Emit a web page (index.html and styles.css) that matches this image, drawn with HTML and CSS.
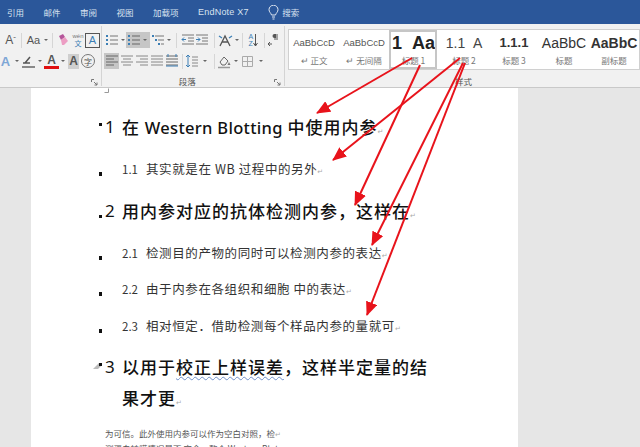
FILE: index.html
```html
<!DOCTYPE html>
<html lang="zh-CN">
<head>
    <meta charset="UTF-8">
    <title>Word</title>
    <link rel="stylesheet" href="styles.css">
</head>
<body>
<div class="window">
    <div class="tabs">
        <span>引用</span><span>邮件</span><span>审阅</span><span>视图</span><span>加载项</span><span class="tab-en">EndNote X7</span>
        <span class="search">
            <svg width="11" height="15" viewBox="0 0 11 15" fill="none" stroke="#dfe7f2"><path d="M3.5 10C3 8 1 7 1 4.700a4.500 4.500 0 0 1 9 0C10 7 8 8 7.500 10zM4 12h3M4.500 14h2"/></svg>
            搜索
        </span>
    </div>

    <div class="ribbon">
        <div class="group group-font">
            <div class="row">
                <span class="ico txt small-a">A<sup>ˇ</sup></span>
                <i class="sep"></i>
                <span class="ico txt aa">Aa</span><b class="caret"></b>
                <i class="sep"></i>
                <span class="ico"><svg width="15" height="15" viewBox="0 0 15 15"><path d="M3 3l4-2 2 3-4 3z" fill="#b5559a"/><path d="M5 7l4-3 3 4-4 4H6z" fill="#ec9dc3"/></svg></span>
                <span class="ico wen"><em>wén</em><span>文</span></span>
                <span class="ico txt boxed">A</span>
            </div>
            <div class="row row-two">
                <span class="ico txt glow">A</span><b class="caret"></b>
                <span class="ico nudge"><svg width="15" height="15" viewBox="0 0 15 15" fill="none"><path d="M2 9h7M9 3L4 9" stroke="#555" stroke-width="1.500"/><path d="M1 13h13" stroke="#666" stroke-width="1.500"/></svg></span><b class="caret"></b>
                <span class="ico txt red-a nudge">A</span><b class="caret"></b>
                <span class="ico txt shaded">A</span>
                <span class="ico circled">字</span>
            </div>
            <svg class="launcher" width="7" height="7" viewBox="0 0 7 7" fill="none" stroke="#777"><path d="M.500 3V.500H3M3 3l3 3M6 3.500V6H3.500"/></svg>
            <div class="group-label"></div>
        </div>

        <div class="group group-para">
            <div class="row">
                <span class="ico"><svg width="14" height="14" viewBox="0 0 14 14"><path d="M1 2h2v2H1zM1 6h2v2H1zM1 10h2v2H1z" fill="#3c7fb5"/><path d="M5 3h8M5 7h8M5 11h8" stroke="#777"/></svg></span><b class="caret"></b>
                <span class="picked">
                    <span class="ico"><svg width="14" height="14" viewBox="0 0 14 14"><path d="M1 2h2v2H1zM1 6h2v2H1zM1 10h2v2H1z" fill="#3c7fb5"/><path d="M5 3h8M5 7h8M5 11h8" stroke="#666"/></svg></span><b class="caret"></b>
                </span>
                <span class="ico"><svg width="14" height="14" viewBox="0 0 14 14"><path d="M1 2h2v2H1zM4 6h2v2H4zM7 10h2v2H7z" fill="#3c7fb5"/><path d="M4 3h9M7 7h6M10 11h3" stroke="#777"/></svg></span><b class="caret"></b>
                <i class="sep sep-a"></i>
                <span class="ico ico-n"><svg width="14" height="14" viewBox="0 0 14 14" fill="none"><path d="M1 2h12M7 5h6M7 8h6M1 11h12" stroke="#777"/><path d="M5 6.500H1M3 4.500L1 6.500l2 2" stroke="#3c7fb5"/></svg></span>
                <span class="ico ico-n"><svg width="14" height="14" viewBox="0 0 14 14" fill="none"><path d="M1 2h12M7 5h6M7 8h6M1 11h12" stroke="#777"/><path d="M1 6.500h4M3 4.500l2 2-2 2" stroke="#3c7fb5"/></svg></span>
                <i class="sep sep-b"></i>
                <span class="ico"><svg width="15" height="14" viewBox="0 0 15 14" fill="none"><path d="M2 13L7 3l5 10M4 9h6" stroke="#555" stroke-width="1.300"/><path d="M1 3l3 2M14 3l-3 2" stroke="#3c7fb5" stroke-width="1.300"/></svg></span><b class="caret"></b>
                <i class="sep sep-c"></i>
                <span class="ico ico-n az"><span>A<br>Z</span><svg width="5" height="13" viewBox="0 0 5 13" fill="none" stroke="#555"><path d="M2.500 0v12M.500 9l2 3 2-3"/></svg></span>
                <i class="sep sep-d"></i>
                <span class="ico ico-n"><svg width="14" height="14" viewBox="0 0 14 14"><path d="M8 1v6M10 1v6" stroke="#555"/><path d="M9 1H7.500a2 2 0 0 0 0 4H9z" fill="#555"/><path d="M1 11h4M3 9l-2 2 2 2" stroke="#555" fill="none"/></svg></span>
            </div>
            <div class="row row-two">
                <span class="picked picked-align"><span class="ico"><svg width="14" height="14" viewBox="0 0 14 14"><path d="M1 2h12M1 5h8M1 8h12M1 11h8" stroke="#666"/></svg></span></span>
                <span class="ico"><svg width="14" height="14" viewBox="0 0 14 14"><path d="M1 2h12M3 5h8M1 8h12M3 11h8" stroke="#888"/></svg></span>
                <span class="ico"><svg width="14" height="14" viewBox="0 0 14 14"><path d="M1 2h12M5 5h8M1 8h12M5 11h8" stroke="#888"/></svg></span>
                <span class="ico"><svg width="14" height="14" viewBox="0 0 14 14"><path d="M1 2h12M1 5h12M1 8h12M1 11h12" stroke="#888"/></svg></span>
                <span class="ico"><svg width="14" height="14" viewBox="0 0 14 14" fill="none"><path d="M1 2h12M1 5h12M1 8h12M1 11h12" stroke="#666"/><path d="M3 0v3M11 0v3M1 12h12" stroke="#3c7fb5"/></svg></span>
                <i class="sep sep-e"></i>
                <span class="ico"><svg width="14" height="14" viewBox="0 0 14 14" fill="none"><path d="M3 1v12M1 3l2-2 2 2M1 11l2 2 2-2" stroke="#3c7fb5"/><path d="M7 3h6M7 6h6M7 9h6M7 12h6" stroke="#888"/></svg></span><b class="caret caret-far"></b>
                <i class="sep sep-f"></i>
                <span class="ico"><svg width="15" height="15" viewBox="0 0 15 15" fill="none"><path d="M3 8l4-5 4 4-3 4H5z" stroke="#666"/><path d="M12 8l1.500 3h-3z" fill="#777"/><path d="M1 13.500h12" stroke="#999" stroke-width="1.500"/></svg></span><b class="caret"></b>
                <span class="ico ico-border"><svg width="13" height="13" viewBox="0 0 13 13" fill="none"><path d="M1.500 1.500h10v10h-10zM6.500 1.500v10M1.500 6.500h10" stroke="#aaa"/></svg></span><b class="caret caret-far"></b>
            </div>
            <svg class="launcher" width="7" height="7" viewBox="0 0 7 7" fill="none" stroke="#777"><path d="M.500 3V.500H3M3 3l3 3M6 3.500V6H3.500"/></svg>
            <div class="group-label label-para">段落</div>
        </div>

        <div class="group group-styles">
            <div class="gallery">
                <div class="style"><span class="sample s-plain">AaBbCcD</span><span class="style-name">↵ 正文</span></div>
                <div class="style"><span class="sample s-plain">AaBbCcD</span><span class="style-name">↵ 无间隔</span></div>
                <div class="style style-on"><span class="sample s-h1">1&nbsp;&nbsp;Aa</span><span class="style-name">标题 1</span></div>
                <div class="style"><span class="sample s-h2">1.1&nbsp;&nbsp;A</span><span class="style-name">标题 2</span></div>
                <div class="style"><span class="sample s-h3">1.1.1</span><span class="style-name">标题 3</span></div>
                <div class="style"><span class="sample s-title">AaBbC</span><span class="style-name">标题</span></div>
                <div class="style"><span class="sample s-sub">AaBbC</span><span class="style-name">副标题</span></div>
            </div>
            <div class="group-label label-styles">样式</div>
        </div>
    </div>

    <div class="workspace">
        <div class="page">
            <svg class="corner" width="5" height="5" viewBox="0 0 5 5" fill="none" stroke="#999"><path d="M.500 4.500v-4h4"/></svg>
            <div class="h1 first"><i class="dot dot-high"></i><span class="num">1</span><span>在 <span class="latin">Western Blotting</span> 中使用内参<u class="mark">↵</u></span></div>
            <div class="h2"><i class="dot"></i><span class="num">1.1</span><span>其实就是在 WB 过程中的另外<u class="mark">↵</u></span></div>
            <div class="h1"><i class="dot"></i><span class="num">2</span><span>用内参对应的抗体检测内参，这样在<u class="mark">↵</u></span></div>
            <div class="h2"><i class="dot"></i><span class="num">2.1</span><span>检测目的产物的同时可以检测内参的表达<u class="mark">↵</u></span></div>
            <div class="h2 tight"><i class="dot"></i><span class="num">2.2</span><span>由于内参在各组织和细胞 中的表达<u class="mark">↵</u></span></div>
            <div class="h2 tight"><i class="dot"></i><span class="num">2.3</span><span>相对恒定．借助检测每个样品内参的量就可<u class="mark">↵</u></span></div>
            <div class="h1"><svg class="anchor" width="8" height="6" viewBox="0 0 8 6"><path d="M0 6l6-6 2 3-3 3z" fill="#bbb"/></svg><i class="dot dot-high"></i><span class="num">3</span><span>以用于<span class="wavy">校正上样误差</span>，这样半定量的结<br>果才更<u class="mark">↵</u></span></div>
            <p class="note">为可信。此外使用内参可以作为空白对照，检<u class="mark">↵</u><br>测蛋白转膜情况是否 完全，整个 Western Blot<u class="mark">↵</u></p>
        </div>
    </div>

    <svg class="arrows" width="640" height="447" viewBox="0 0 640 447">
        <defs>
            <marker id="head" markerWidth="7" markerHeight="6" refX="6.500" refY="3" orient="auto"><path d="M0 0L7 3L0 6z" fill="#e8131b"/></marker>
        </defs>
        <g stroke="#e8131b" stroke-width="2">
            <path d="M412 58L317 113" marker-end="url(#head)"/>
            <path d="M420 65L355 205" marker-end="url(#head)"/>
            <path d="M460 58L333 160" marker-end="url(#head)"/>
            <path d="M463 63L372 245" marker-end="url(#head)"/>
            <path d="M465 63L367 315" marker-end="url(#head)"/>
        </g>
    </svg>
</div>
</body>
</html>
```

FILE: styles.css
```css
html, body {
    margin: 0;
    height: 100%;
    overflow: hidden;
}
body {
    font-family: "Noto Sans CJK SC", "Liberation Sans", sans-serif;
    color: #333;
}
.window {
    position: relative;
    width: 640px;
    height: 447px;
    overflow: hidden;
    display: flex;
    flex-direction: column;
}

/* title tabs */
.tabs {
    height: 24px;
    flex: none;
    background-color: #2b579a;
    color: #d9e3f0;
    font-size: 8.500px;
    display: flex;
    align-items: center;
    gap: 19.500px;
    padding-left: 7px;
}
.tab-en {
    font-family: "Liberation Sans", sans-serif;
    font-size: 9px;
    letter-spacing: .2px;
}
.search {
    display: flex;
    align-items: center;
    gap: 3px;
}

/* ribbon */
.ribbon {
    height: 63px;
    flex: none;
    display: flex;
    background-color: #f1f1f1;
    border-bottom: 1px solid #c9c9c9;
}
.group {
    position: relative;
    box-sizing: border-box;
    height: 60px;
    margin-top: 2px;
    border-right: 1px solid #d4d4d4;
}
.group-font {
    width: 103px;
    padding-left: 3px;
}
.group-para {
    width: 184px;
    padding-left: 2px;
}
.group-styles {
    flex: 1;
    border-right: none;
    padding-left: 2px;
}
.row {
    display: flex;
    align-items: center;
    height: 16px;
    margin-top: 6px;
}
.row-two {
    margin-top: 5px;
}
.ico {
    width: 15px;
    height: 15px;
    flex: none;
    display: flex;
    align-items: center;
    justify-content: center;
}
.ico-n {
    width: 14px;
}
.nudge {
    margin-left: 1px;
}
.txt {
    font-family: "Liberation Sans", sans-serif;
    color: #555;
    font-size: 12px;
}
.small-a sup {
    font-size: 8px;
    line-height: 0;
}
.aa {
    width: 17px;
    font-size: 11px;
}
.caret {
    width: 7px;
    flex: none;
    display: flex;
    justify-content: center;
}
.caret::after {
    content: "";
    border-left: 2px solid transparent;
    border-right: 2px solid transparent;
    border-top: 2.500px solid #666;
}
.caret-far {
    margin-left: 2px;
}
.sep {
    width: 1px;
    height: 15px;
    flex: none;
    margin: 0 3px;
    background-color: #d6d6d6;
}
.sep-a {
    margin: 0 4px;
}
.sep-b {
    margin: 0 3px 0 5px;
}
.sep-c {
    margin: 0 3px 0 2px;
}
.sep-d {
    margin: 0 2px 0 4px;
}
.sep-e {
    margin: 0 1px 0 3px;
}
.sep-f {
    margin: 0 2px 0 6px;
}
.wen {
    flex-direction: column;
    justify-content: flex-start;
    width: 14px;
    font-size: 7px;
    line-height: 7px;
    color: #3c7fb5;
}
.wen em {
    font-family: "Liberation Sans", sans-serif;
    font-size: 6px;
    line-height: 7px;
    font-style: normal;
    color: #777;
}
.boxed {
    box-sizing: border-box;
    border: 1px solid #555;
    color: #3c7fb5;
    font-size: 11px;
}
.glow {
    margin-left: -5px;
    color: #7ea6d6;
    font-weight: bold;
    font-size: 13px;
}
.red-a {
    font-weight: bold;
    box-sizing: border-box;
    border-bottom: 3px solid #e01010;
    line-height: 12px;
}
.shaded {
    width: 11px;
    margin: 0 2px;
    background-color: #cfcfcf;
    font-weight: bold;
}
.circled {
    box-sizing: border-box;
    width: 14px;
    height: 14px;
    border: 1px solid #777;
    border-radius: 50%;
    font-size: 8px;
    color: #555;
}
.picked {
    display: flex;
    align-items: center;
    height: 16px;
    padding-right: 2px;
    background-color: #c6c6c6;
}
.picked-align {
    padding: 0;
}
.az {
    font-family: "Liberation Sans", sans-serif;
    font-size: 7px;
    line-height: 7px;
    color: #3c7fb5;
}
.ico-border {
    margin-left: 1px;
}
.launcher {
    position: absolute;
    right: 3px;
    bottom: 0;
}
.group-label {
    font-size: 8.500px;
    line-height: 12px;
    color: #555;
    text-align: center;
    margin-top: 6px;
}
.label-para {
    padding-right: 14px;
}
.label-styles {
    margin-top: 5px;
}

/* style gallery */
.gallery {
    display: flex;
    box-sizing: border-box;
    height: 41px;
    margin: 3px 0 0 1px;
    background-color: #fff;
    border: 1px solid #d0d0d0;
    overflow: hidden;
}
.style {
    width: 50px;
    flex: none;
    box-sizing: border-box;
    display: flex;
    flex-direction: column;
    align-items: center;
    overflow: hidden;
    white-space: nowrap;
}
.style-on {
    width: 48px;
    align-items: flex-start;
    padding-left: 1px;
    border: 2px solid #c6c6c6;
    margin-right: 2px;
}
.style-on .style-name {
    align-self: center;
}
.sample {
    height: 24px;
    line-height: 26px;
    font-family: "Liberation Sans", sans-serif;
    color: #333;
}
.s-plain {
    font-size: 9.500px;
    color: #555;
}
.s-h1 {
    font-size: 18px;
    font-weight: bold;
    color: #222;
    line-height: 22px;
    height: 22px;
}
.s-h2 {
    font-size: 14px;
    color: #444;
}
.s-h3 {
    font-size: 13px;
    font-weight: bold;
}
.s-title {
    font-size: 14px;
}
.s-sub {
    font-size: 14px;
    font-weight: bold;
}
.style-name {
    font-size: 8.500px;
    line-height: 12px;
    color: #777;
}

/* document */
.workspace {
    flex: 1;
    background-color: #e6e6e6;
    padding-left: 31px;
    overflow: hidden;
}
.page {
    position: relative;
    width: 487px;
    height: 100%;
    box-sizing: border-box;
    padding: 23px 0 0 66px;
    background-color: #fff;
    overflow: hidden;
}
.corner {
    position: absolute;
    left: 73px;
    top: 0;
    transform: rotate(180deg);
}
.h1, .h2 {
    display: flex;
    position: relative;
}
.h1 {
    margin-top: 11.500px;
    font-size: 17px;
    line-height: 31px;
    font-weight: 500;
    letter-spacing: 1px;
    color: #111;
}
.h2 {
    margin-top: 10px;
    font-size: 12.500px;
    line-height: 22px;
    letter-spacing: .6px;
    color: #333;
}
.first {
    margin-top: 0;
}
.latin {
    font-family: "Noto Sans", sans-serif;
    font-size: 16.500px;
    font-weight: 500;
    letter-spacing: .3px;
}
.tight {
    margin-top: 11.500px;
}
.num {
    flex: none;
    font-family: "Noto Sans", sans-serif;
    font-weight: 400;
    letter-spacing: 0;
}
.h1 .num {
    width: 17px;
    margin-left: 8px;
    font-size: 17px;
}
.h2 .num {
    width: 24px;
    margin-left: 25px;
    font-size: 11.500px;
}
.h2 .num, .h2 {
    font-family: "Noto Sans CJK SC", sans-serif;
}
.dot {
    position: absolute;
    left: 2px;
    top: 20px;
    width: 3px;
    height: 3px;
    background-color: #111;
}
.h2 .dot {
    top: 14px;
    height: 4px;
}
.h1 .dot-high {
    top: 12px;
}
.anchor {
    position: absolute;
    left: -4px;
    top: 12px;
}
.mark {
    font-family: "DejaVu Sans", sans-serif;
    font-size: 7px;
    font-weight: 400;
    text-decoration: none;
    color: #aaa;
}
.wavy {
    text-decoration: underline wavy #6f8fc9 1px;
    text-underline-offset: 2px;
}
.note {
    margin: 8px 0 0 8px;
    font-size: 8.500px;
    line-height: 13px;
    color: #555;
    white-space: nowrap;
}

/* arrows drawn over the screenshot */
.arrows {
    position: absolute;
    left: 0;
    top: 0;
}
```
